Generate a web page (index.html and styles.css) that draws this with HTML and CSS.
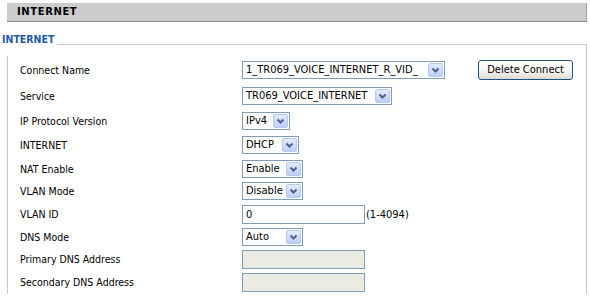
FILE: index.html
```html
<!DOCTYPE html>
<html>
<head>
<meta charset="utf-8">
<link rel="stylesheet" href="styles.css">
</head>
<body>
<div class="titlebar">INTERNET</div>
<fieldset class="group">
  <legend>INTERNET</legend>
  <div class="form">
    <div class="lbl">Connect Name</div>
    <div class="ctl">
      <span class="select w-name"><span class="val">1_TR069_VOICE_INTERNET_R_VID_</span><span class="arrow"><svg viewBox="0 0 13 12" width="13" height="12"><path d="M3.5 4.5 L6.5 7.5 L9.5 4.5" fill="none" stroke="#4d6185" stroke-width="2"/></svg></span></span>
      <button class="btn">Delete Connect</button>
    </div>

    <div class="lbl">Service</div>
    <div class="ctl"><span class="select w-svc"><span class="val">TR069_VOICE_INTERNET</span><span class="arrow"><svg viewBox="0 0 13 12" width="13" height="12"><path d="M3.5 4.5 L6.5 7.5 L9.5 4.5" fill="none" stroke="#4d6185" stroke-width="2"/></svg></span></span></div>

    <div class="lbl">IP Protocol Version</div>
    <div class="ctl"><span class="select w-ip"><span class="val">IPv4</span><span class="arrow"><svg viewBox="0 0 13 12" width="13" height="12"><path d="M3.5 4.5 L6.5 7.5 L9.5 4.5" fill="none" stroke="#4d6185" stroke-width="2"/></svg></span></span></div>

    <div class="lbl">INTERNET</div>
    <div class="ctl"><span class="select w-dhcp"><span class="val">DHCP</span><span class="arrow"><svg viewBox="0 0 13 12" width="13" height="12"><path d="M3.5 4.5 L6.5 7.5 L9.5 4.5" fill="none" stroke="#4d6185" stroke-width="2"/></svg></span></span></div>

    <div class="lbl">NAT Enable</div>
    <div class="ctl"><span class="select w-sm"><span class="val">Enable</span><span class="arrow"><svg viewBox="0 0 13 12" width="13" height="12"><path d="M3.5 4.5 L6.5 7.5 L9.5 4.5" fill="none" stroke="#4d6185" stroke-width="2"/></svg></span></span></div>

    <div class="lbl">VLAN Mode</div>
    <div class="ctl"><span class="select w-sm"><span class="val">Disable</span><span class="arrow"><svg viewBox="0 0 13 12" width="13" height="12"><path d="M3.5 4.5 L6.5 7.5 L9.5 4.5" fill="none" stroke="#4d6185" stroke-width="2"/></svg></span></span></div>

    <div class="lbl">VLAN ID</div>
    <div class="ctl"><input class="text" type="text" value="0"><span class="hint">(1-4094)</span></div>

    <div class="lbl">DNS Mode</div>
    <div class="ctl"><span class="select w-sm"><span class="val">Auto</span><span class="arrow"><svg viewBox="0 0 13 12" width="13" height="12"><path d="M3.5 4.5 L6.5 7.5 L9.5 4.5" fill="none" stroke="#4d6185" stroke-width="2"/></svg></span></span></div>

    <div class="lbl">Primary DNS Address</div>
    <div class="ctl"><input class="text" type="text" disabled></div>

    <div class="lbl">Secondary DNS Address</div>
    <div class="ctl"><input class="text" type="text" disabled></div>
  </div>
</fieldset>
</body>
</html>
```

FILE: styles.css
```css
html, body {
  margin: 0;
  padding: 0;
  background: #ffffff;
}
body {
  font-family: "DejaVu Sans Condensed", "Liberation Sans", sans-serif;
  font-size: 10.5px;
  color: #000;
  overflow: hidden;
}
.titlebar {
  margin: 3px 3px 0 7px;
  height: 18px;
  line-height: 18px;
  padding-left: 10px;
  background: #cccccc;
  border-bottom: 1px solid #8a8a8a;
  border-right: 1px solid #a0a0a0;
  font-family: "DejaVu Sans", sans-serif;
  font-weight: bold;
  font-size: 10px;
  letter-spacing: 0.6px;
}
.group {
  margin: 10px 3px 0 7px;
  padding: 0;
  border: 1px solid #c8c8c8;
  border-bottom: none;
  min-width: 0;
}
.group legend {
  margin-left: -6px;
  padding: 0 3px 10px 0;
  line-height: 14px;
  font-weight: bold;
  font-size: 10.5px;
  color: #2158a8;
}
.form {
  display: grid;
  grid-template-columns: 222px 1fr;
  grid-template-rows: 27px 26px 24px 24px 23px 22px 24px 22px 22px 24px;
  align-items: center;
  padding-left: 12px;
}
.lbl {
  white-space: nowrap;
}
.ctl {
  display: flex;
  align-items: center;
}
.select {
  display: inline-flex;
  align-items: center;
  box-sizing: border-box;
  height: 18px;
  border: 1px solid #7f9db9;
  background: #fff;
}
.select .val {
  flex: 1;
  padding-left: 3px;
  line-height: 16px;
  font-size: 11px;
  white-space: nowrap;
}
.arrow {
  box-sizing: border-box;
  flex: none;
  width: 15px;
  height: 14px;
  margin: 0 1px 0 2px;
  border: 1px solid #b7c9f3;
  border-radius: 2px;
  background: linear-gradient(#e2eafe, #bccefa);
  display: flex;
  align-items: center;
  justify-content: center;
}
.arrow svg {
  display: block;
}
.w-name { width: 203px; }
.w-svc { width: 150px; }
.w-ip { width: 48px; }
.w-dhcp { width: 57px; }
.w-sm { width: 61px; }
.btn {
  margin-left: 33px;
  box-sizing: border-box;
  width: 95px;
  height: 20px;
  padding: 0;
  border: 1px solid #1c4f86;
  border-radius: 3px;
  background: linear-gradient(#ffffff, #f3f3ee 60%, #dcdcd3);
  font-family: inherit;
  font-size: 11px;
  color: #000;
}
.text {
  box-sizing: border-box;
  width: 123px;
  height: 19px;
  margin: 0;
  padding: 0 3px;
  border: 1px solid #7f9db9;
  font-family: inherit;
  font-size: 11px;
  color: #000;
  background: #fff;
}
.text:disabled {
  background: #ebeae3;
}
.hint {
  margin-left: 1px;
  font-size: 11px;
}
```
